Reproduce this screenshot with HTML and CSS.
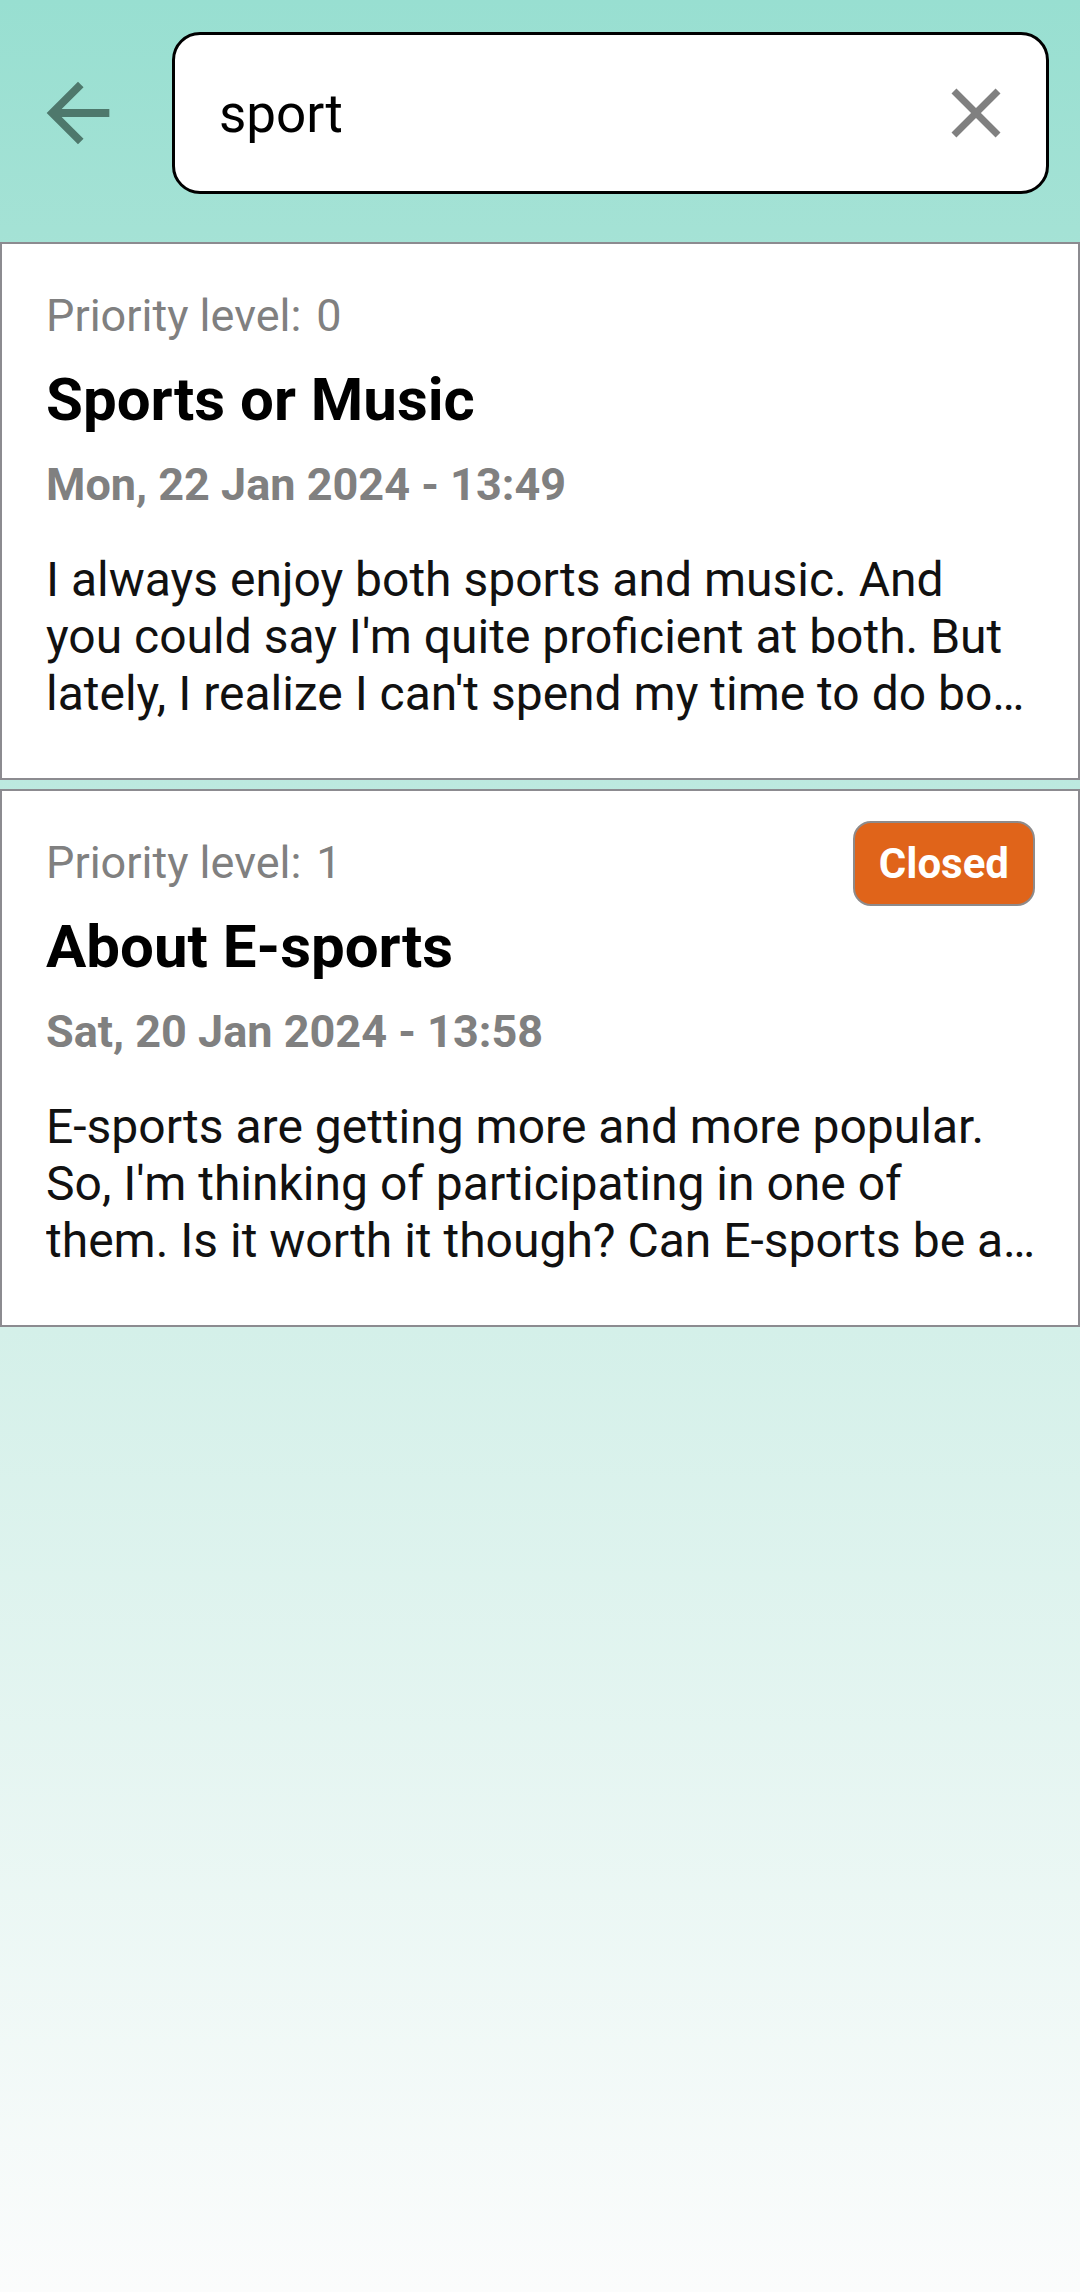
FILE: index.html
```html
<!DOCTYPE html>
<html lang="en">
<head>
<meta charset="utf-8">
<title>Search</title>
<link rel="stylesheet" href="styles.css">
</head>
<body>
<div class="page">
  <header class="header">
    <button class="back" aria-label="Back">
      <svg viewBox="0 0 24 24" width="94" height="94"><path fill="#4e786c" d="M20 11H7.83l5.59-5.59L12 4l-8 8 8 8 1.41-1.41L7.83 13H20v-2z"/></svg>
    </button>
    <div class="search">
      <span class="query">sport</span>
      <svg class="clear" viewBox="0 0 24 24" width="84" height="84"><path fill="#808080" d="M19 6.41L17.59 5 12 10.59 6.41 5 5 6.41 10.59 12 5 17.59 6.41 19 12 13.41 17.59 19 19 17.59 13.41 12z"/></svg>
    </div>
  </header>

  <div class="list">
    <article class="card">
      <div class="card-top">
        <span class="priority">Priority level:</span><span class="priority-val">0</span>
      </div>
      <h2 class="title">Sports or Music</h2>
      <div class="date">Mon, 22 Jan 2024 - 13:49</div>
      <p class="body">I always enjoy both sports and music. And <span class="line">you could say I'm quite proficient at both. But</span> <span class="line">lately, I realize I can't spend my time to do both of them anymore. I need to choose one of them to focus on.</span></p>
    </article>

    <article class="card">
      <div class="card-top">
        <span class="priority">Priority level:</span><span class="priority-val">1</span>
        <span class="badge">Closed</span>
      </div>
      <h2 class="title">About E-sports</h2>
      <div class="date">Sat, 20 Jan 2024 - 13:58</div>
      <p class="body">E-sports are getting more and more popular. <span class="line">So, I'm thinking of participating in one of</span> <span class="line">them. Is it worth it though? Can E-sports be a career for someone like me in the future?</span></p>
    </article>
  </div>
</div>
</body>
</html>
```

FILE: styles.css
```css
html, body {
  margin: 0;
  padding: 0;
}
body {
  width: 1080px;
  min-height: 2292px;
  background: linear-gradient(180deg, #98dfd1 0%, #a4e2d5 10%, #d4f0e9 58%, #fbfcfc 100%);
  font-family: Roboto, "Noto Sans", sans-serif;
  color: #000;
}
.page {
  display: flex;
  flex-direction: column;
}
.header {
  height: 242px;
  box-sizing: border-box;
  display: flex;
  align-items: flex-start;
  padding: 32px 31px 0 31px;
}
.back {
  width: 94px;
  height: 162px;
  padding: 0;
  margin: 0 47px 0 0;
  border: none;
  background: none;
  display: flex;
  align-items: center;
  justify-content: center;
}
.back svg { display: block; }
.search {
  flex: 1;
  height: 162px;
  box-sizing: border-box;
  border: 3px solid #000;
  border-radius: 28px;
  background: #fff;
  display: flex;
  align-items: center;
  padding: 0 28px 0 44px;
}
.query {
  flex: 1;
  font-size: 53px;
  color: #000;
  line-height: 60px;
  padding-top: 2px;
}
.clear { display: block; }
.list {
  display: flex;
  flex-direction: column;
  gap: 9px;
}
.card {
  background: #fff;
  border: 2px solid #8c8b90;
  padding: 47px 43px 56px 44px;
  display: flex;
  flex-direction: column;
}
.card-top {
  height: 50px;
  display: flex;
  align-items: center;
}
.priority, .priority-val {
  font-size: 45px;
  line-height: 50px;
  color: #808080;
}
.priority-val { margin-left: 15px; }
.badge {
  margin-left: auto;
  height: 85px;
  box-sizing: border-box;
  padding: 0 24px;
  display: flex;
  align-items: center;
  background: #e0641a;
  border: 2px solid #8e8a8a;
  border-radius: 18px;
  color: #fff;
  font-weight: 700;
  font-size: 42px;
  flex-shrink: 0;
}
.title {
  margin: 24px 0 0 0;
  font-size: 60px;
  line-height: 70px;
  font-weight: 700;
  color: #000;
}
.date {
  margin-top: 23px;
  font-size: 45px;
  line-height: 54px;
  font-weight: 700;
  color: #808080;
}
.body {
  margin: 39px -4px 0 0;
  font-size: 48px;
  line-height: 57px;
  height: 171px;
  color: #111;
  overflow: hidden;
  text-overflow: ellipsis;
}
.line {
  white-space: nowrap;
}
```
